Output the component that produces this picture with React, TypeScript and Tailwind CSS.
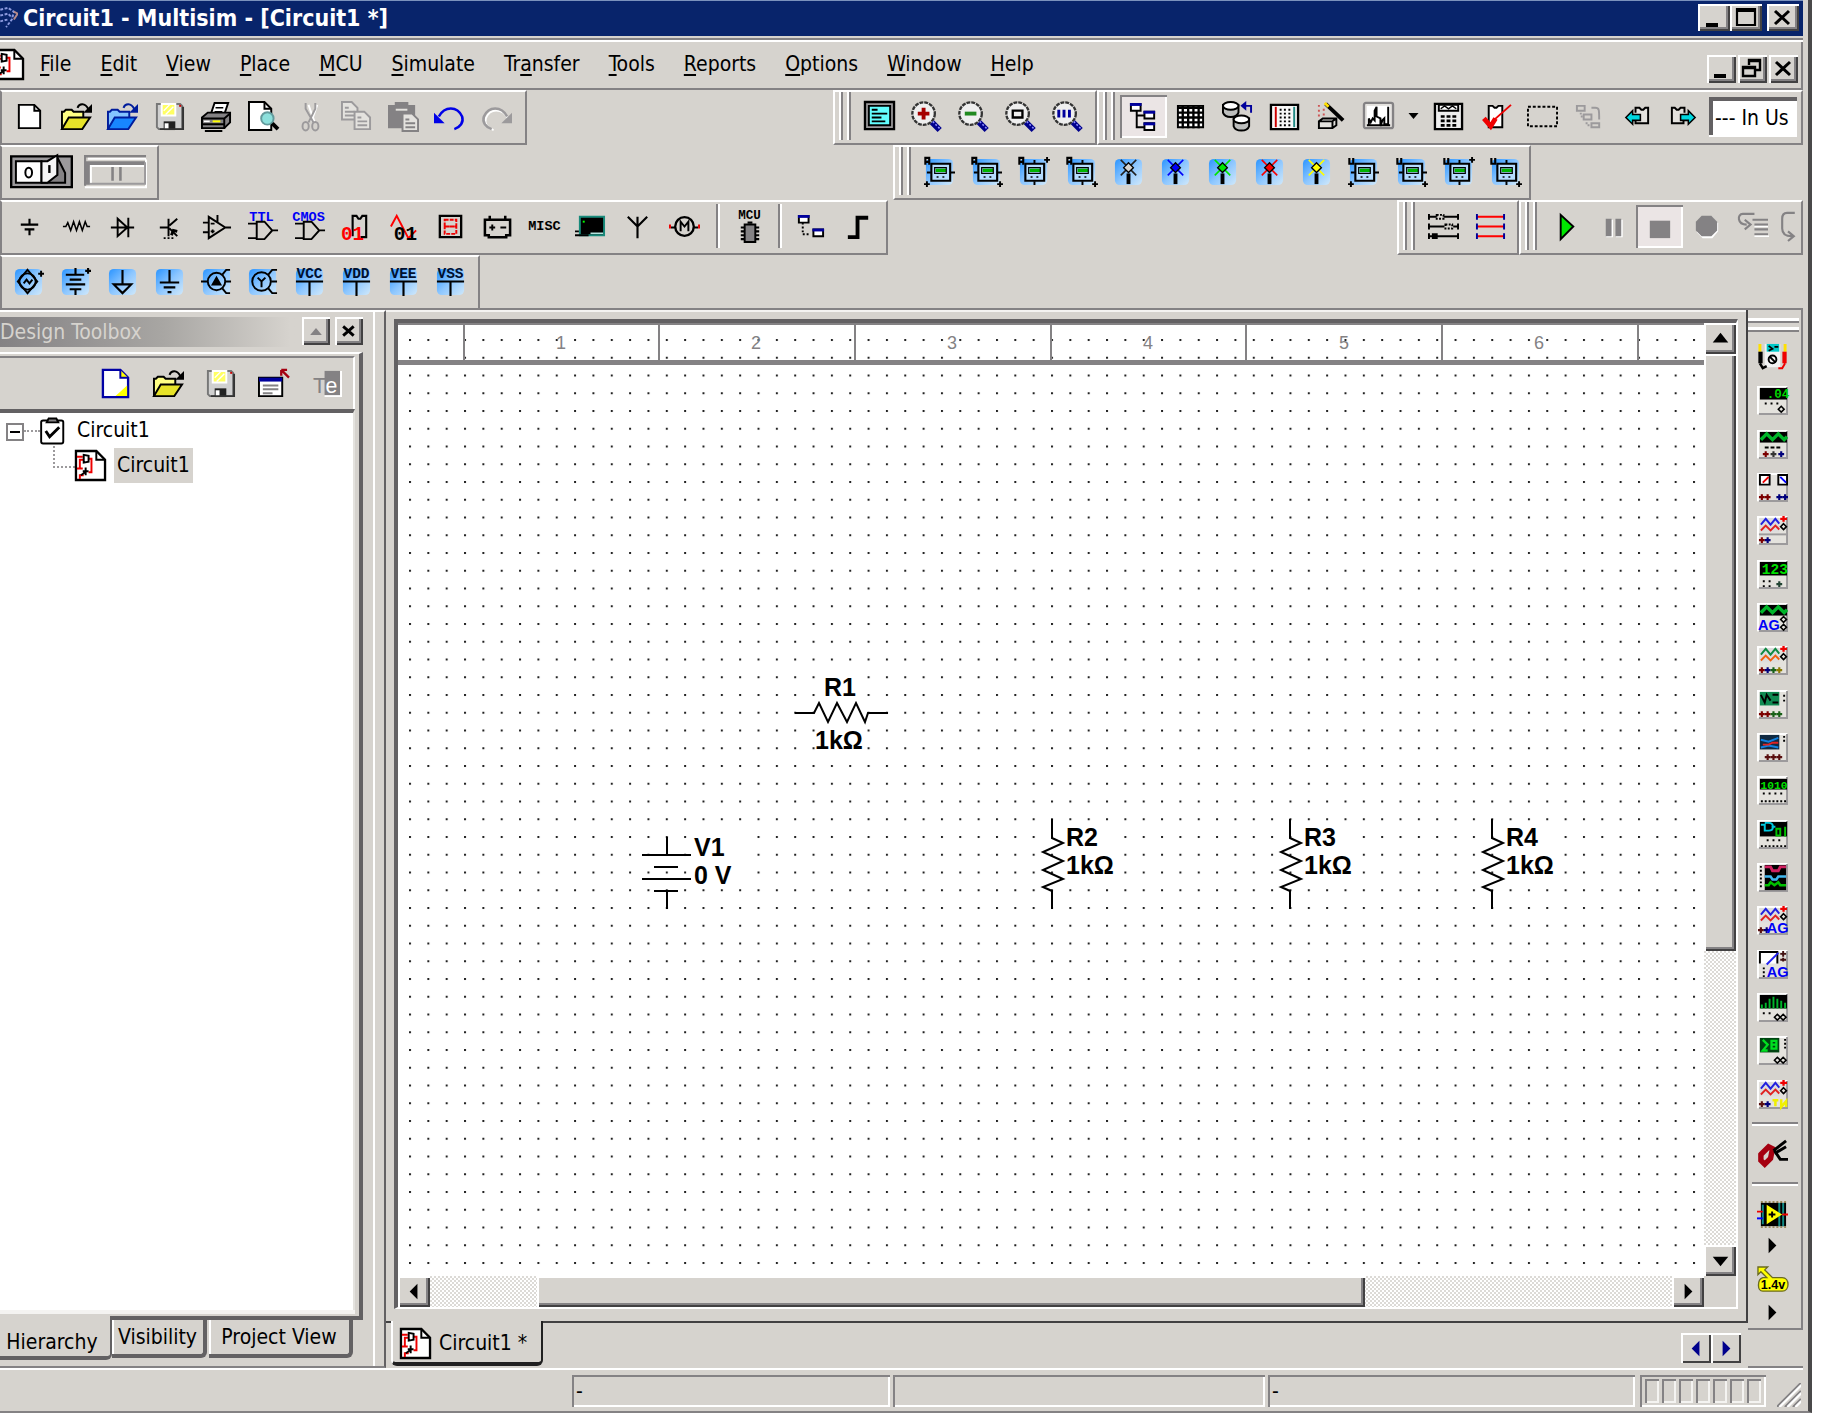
import type { ReactNode } from "react";

type Tool = { label: string; icon: ReactNode; disabled?: boolean };

const RAISED =
  "shadow-[inset_2px_2px_0_#fff,inset_-2px_-2px_0_#424142,inset_-4px_-4px_0_#848284]";
const DITHER =
  "bg-[repeating-conic-gradient(#ffffff_0_25%,#dcdad6_0_50%)] bg-[length:4px_4px]";

// Every toolbar glyph is drawn on the classic 16x16 grid.
function Ic({ children, stroke = "#000" }: { children: ReactNode; stroke?: string }) {
  return (
    <svg
      viewBox="0 0 16 16"
      className="h-[31px] w-[31px] shrink-0 overflow-visible"
      fill="none"
      stroke={stroke}
      aria-hidden="true"
    >
      {children}
    </svg>
  );
}

function GlyphText({ x, y, size, fill, children }: { x: number; y: number; size: number; fill: string; children: string }) {
  return (
    <text x={x} y={y} fontSize={size} fill={fill} stroke="none" fontWeight="bold" textAnchor="middle" fontFamily="Liberation Mono, monospace">
      {children}
    </text>
  );
}

/* ---------- standard toolbar ---------- */

const folder = (light: string, line: string, front: string) => (
  <Ic stroke={line}>
    <path fill={light} d="M.5 14.5v-9h1l1-1h3l1 1h5v3" />
    <path fill={front} d="M.5 14.5l3.500-6h11l-4 6z" />
    <path d="M8.500 3.500c1-2.500 4-2.500 5.500.5" />
    <path fill={line} stroke="none" d="M16 1.500v4.500h-4.500z" />
  </Ic>
);

const floppy = (
  <Ic stroke="#777">
    <path fill="#d0d0d0" d="M1.500 1.500h12l1 1v12h-12l-1-1z" />
    <path fill="#ffff63" stroke="#fff" d="M4 1.500h7v6h-7z" />
    <path stroke="#fff" strokeWidth=".7" d="M5 5l3-3M6 7l4-4" />
    <path fill="#222" stroke="none" d="M5 10.500h6v4.500h-6z" />
    <path fill="#fff" stroke="none" d="M5.500 11.500h2v3h-2z" />
    <path stroke="#c00" d="M13 2.500h1" />
    <path stroke="#333" d="M15 3v11.500h-12" />
  </Ic>
);

const miniPage = (x: number, y: number) => (
  <g transform={`translate(${x} ${y})`}>
    <path fill="#e4e2de" d="M.5.5h5l3 3v6h-8z" />
    <path d="M2 3.500h2M2 5.500h5M2 7.500h5" />
  </g>
);

const STANDARD: Tool[] = [
  { label: "New", icon: <Ic><path fill="#fff" d="M2.500 2h8l3 3v9h-11z" /><path d="M10.500 2v3h3" /></Ic> },
  { label: "Open", icon: folder("#ffff84", "#000", "#e7e329") },
  { label: "Open sample", icon: folder("#84c3ff", "#001c9c", "#1886ff") },
  { label: "Save", icon: floppy },
  {
    label: "Print",
    icon: (
      <Ic>
        <path fill="#fff" d="M5 7l2-6h7l-2 6z" />
        <path d="M7.500 3.500h4M7 5.500h4" strokeWidth=".8" />
        <path fill="#848284" d="M.5 8.500l3-2.500h11.500v5l-3 3h-11.500z" />
        <path d="M.5 9h11.500l3-2.500M.5 12h11.500M12 9v5.500M2 15.500h9" />
        <path stroke="#ffff00" d="M6 10.500h4" />
        <path stroke="#fff" strokeWidth=".8" d="M1.500 10.500h3" />
      </Ic>
    ),
  },
  {
    label: "Print preview",
    icon: (
      <Ic>
        <path fill="#fff" d="M.5 .5h8l3.500 3.500v11h-11.500z" />
        <path d="M8.500 .5v3.500h3.500" />
        <circle cx="10" cy="9" r="3.200" fill="#8ce0dc" stroke="#639a9c" />
        <path strokeWidth="2" d="M12.500 11.500l3 3" />
      </Ic>
    ),
  },
  {
    label: "Cut",
    disabled: true,
    icon: (
      <Ic stroke="#9c9a9c">
        <path stroke="#fff" d="M7.500 2l3 8.500M12 2l-3 8.500" />
        <path d="M6 1v3l4 7M11 1v3l-3.500 7" />
        <ellipse cx="6" cy="13" rx="1.600" ry="2.200" />
        <ellipse cx="11" cy="13" rx="1.600" ry="2.200" />
      </Ic>
    ),
  },
  { label: "Copy", disabled: true, icon: <Ic stroke="#9c9a9c">{miniPage(0, 0)}{miniPage(6.500, 5)}</Ic> },
  {
    label: "Paste",
    disabled: true,
    icon: (
      <Ic stroke="#848284">
        <path fill="#848284" d="M.5 2.500h3.500v-1.500h6v1.500h3.500v11h-13z" />
        <path stroke="#e4e2de" d="M4 4.500h6" />
        {miniPage(7, 6)}
      </Ic>
    ),
  },
  {
    label: "Undo",
    icon: (
      <Ic stroke="#0000e7">
        <path strokeWidth="1.300" d="M2.500 8c3-5.500 9.500-5.500 12 0c1 3-1 5.500-4 6.500" />
        <path fill="#0000e7" stroke="none" d="M0 6v5.500h5.500z" />
      </Ic>
    ),
  },
  {
    label: "Redo",
    disabled: true,
    icon: (
      <Ic stroke="#9c9a9c">
        <path stroke="#fff" d="M14 9c-3-5.500-9.500-5.500-11.500 0c-1 3 1 5 4 6" />
        <path strokeWidth="1.300" d="M13.500 8c-3-5.500-9.500-5.500-12 0c-1 3 1 5.500 4 6.500" />
        <path fill="#9c9a9c" stroke="none" d="M16 6v5.500h-5.500z" />
      </Ic>
    ),
  },
];

/* ---------- view toolbar ---------- */

const zoomGlass = (mark: ReactNode) => (
  <Ic>
    <circle cx="6.500" cy="6.500" r="5.800" fill="#efefef" stroke="#333" strokeWidth="1.200" strokeDasharray="2 .5" />
    <path stroke="#00008c" strokeWidth="3" d="M10.800 11l4 4" />
    <path stroke="#8c8cff" strokeWidth=".8" strokeDasharray="1 1" d="M11.200 10.600l4 4" />
    {mark}
  </Ic>
);

const VIEW: Tool[] = [
  {
    label: "Full screen",
    icon: (
      <Ic>
        <path fill="#9c9a9c" strokeWidth="1.200" d="M.5.5h15v14h-15z" />
        <path fill="#63ffff" d="M2.500 2.500h11v10h-11z" />
        <path d="M4 4.500h3M4 6.500h8M4 8.500h5M4 10.500h7" />
      </Ic>
    ),
  },
  { label: "Zoom in", icon: zoomGlass(<path stroke="#a50000" strokeWidth="2" d="M6.500 3.500v6M3.500 6.500h6" />) },
  { label: "Zoom out", icon: zoomGlass(<path stroke="#218a21" strokeWidth="2" d="M3.500 6.500h6" />) },
  { label: "Zoom area", icon: zoomGlass(<path strokeWidth="1.200" d="M4 5h5v3.500h-5z" />) },
  { label: "Zoom fit", icon: zoomGlass(<path stroke="#00009c" strokeWidth="1.500" d="M3.500 4.500v4M6.200 4.500v4M9 4.500v4" />) },
];

const node = (x: number, y: number) => (
  <g transform={`translate(${x} ${y})`}>
    <path fill="#fff" stroke="#000" d="M.5.5h5v3.500h-5z" />
    <path stroke="#00009c" strokeWidth="1.500" d="M0 .8h6" />
  </g>
);

const hierarchyIcon = (
  <Ic>
    <path d="M4.500 5v8.500h4M4.500 7.500h4" />
    {node(1, 1)}
    {node(8, 5)}
    {node(8, 11)}
  </Ic>
);

const disk = (x: number, y: number) => (
  <g transform={`translate(${x} ${y})`}>
    <path fill="#bdbebd" d="M.5 2v4c1 3 7 3 8 0v-4z" />
    <ellipse cx="4.500" cy="2.500" rx="4" ry="2" fill="#fff" />
  </g>
);

const MAIN_LEFT: Tool[] = [
  {
    label: "Spreadsheet view",
    icon: (
      <Ic>
        <path fill="#fff" d="M1.500 2.500h13v11h-13z" />
        <path strokeWidth="1.200" d="M1.500 3.500h13M1.500 6h13M1.500 8.500h13M1.500 11h13M4 2v12M6.800 2v12M9.500 2v12M12.200 2v12" />
      </Ic>
    ),
  },
  {
    label: "Database manager",
    icon: (
      <Ic>
        {disk(0, 0)}
        {disk(5.500, 7)}
        <path stroke="#00009c" d="M15 6v-3.500h-4" />
        <path fill="#00009c" stroke="none" d="M9.500 2.500l3-2.500v5z" />
      </Ic>
    ),
  },
  {
    label: "Breadboard",
    icon: (
      <Ic>
        <path fill="#f7f7f7" strokeWidth="1.200" d="M1 2h14v12.500h-14z" />
        <path stroke="#c00" d="M3.500 3v10.500" />
        <path stroke="#218a84" d="M13 3v10.500" />
        <path strokeDasharray="1 1" d="M6 4v9M8.200 4v9M10.500 4v9" />
      </Ic>
    ),
  },
  {
    label: "Component wizard",
    icon: (
      <Ic>
        <path stroke="#c55" strokeDasharray="1 1.500" d="M1.500 2v7M4 4v4" />
        <path strokeWidth="2" d="M5 1.500l9 8.500" />
        <path stroke="#ffe000" strokeWidth="1.500" d="M4.500 1l2 2" />
        <path fill="#e4e2de" d="M1.500 10.500l2-1.500h7v3.500l-2 1.500h-7zM1.500 10.500h7v3.500M8.500 10.500l2-1.500" />
      </Ic>
    ),
  },
  {
    label: "Grapher",
    icon: (
      <Ic>
        <rect x=".5" y="1" width="15" height="13" rx="1" fill="#e4e2de" stroke="#848284" strokeWidth="1.200" />
        <path fill="#fff" stroke="none" d="M2 2.500h12v10h-12z" />
        <path d="M2 12.500h12M3 12v-3l1 2 1-2 1 1v-5l1-2v5l2 1v4l1-3 1-1v3h2v-9" />
      </Ic>
    ),
  },
];

const MAIN_RIGHT: Tool[] = [
  {
    label: "Postprocessor",
    icon: (
      <Ic>
        <path fill="#efefef" strokeWidth="1.200" d="M1 1.500h14v13h-14z" />
        <path fill="#fff" d="M3 2h10v3h-10z" />
        <path d="M4 4l2-1.500 2 1.500 2-1.500 2 1.500" strokeWidth=".8" />
        <path strokeDasharray="2 1" strokeWidth="1.400" d="M4 8h9M4 10.300h9M4 12.600h9" />
      </Ic>
    ),
  },
  {
    label: "Electrical rules check",
    icon: (
      <Ic>
        <path fill="#fff" d="M4.500 2.500h2l1 1h1l1-1h2v11h-7z" />
        <path stroke="#e00" strokeWidth="2.500" d="M2 9l3.500 4 2.500-4" />
        <path stroke="#e00" d="M7 10l9-8" />
      </Ic>
    ),
  },
  { label: "Capture area", icon: <Ic><path strokeDasharray="1.500 1" d="M.5 3h15v10h-15z" /></Ic> },
  {
    label: "Go to parent sheet",
    disabled: true,
    icon: (
      <Ic stroke="#9c9a9c">
        <path d="M1.500 2.500h4v2.500h-4zM5 7h4v2.500h-4zM9 11.500h4v2h-4zM9 3.500h2c2 0 2 1 2 6" />
        <path strokeDasharray="1 1" d="M3.500 6v2h1M6.500 11v1.500h2" />
      </Ic>
    ),
  },
  {
    label: "Back annotate",
    icon: (
      <Ic>
        <path fill="#e4e2de" d="M7.500 6v-2.500h2l1 1h1l1-1h1.500v8h-6.500v-2" />
        <path fill="#00d8e0" strokeWidth=".8" d="M2.500 8.500l3.500-3.500v2h4v3h-4v2z" />
      </Ic>
    ),
  },
  {
    label: "Forward annotate",
    icon: (
      <Ic>
        <path fill="#e4e2de" d="M8.500 6v-2.500h-2l-1 1h-1l-1-1h-1.500v8h6v-2" />
        <path fill="#00d8e0" strokeWidth=".8" d="M14 8.500l-3.500-3.500v2h-4v3h4v2z" />
      </Ic>
    ),
  },
];

/* ---------- virtual measurement toolbar ---------- */

const Tile = () => <rect x="1" y="1.500" width="14" height="13.500" rx="2.500" fill="url(#tile)" stroke="none" />;

function meter(letter: string, vertical: boolean, px: number, py: number) {
  return (
    <Ic>
      <Tile />
      <path strokeWidth="1.100" fill="#b4dcff" d="M3.800 4h9.700v8.800h-9.700z" />
      <path stroke="#00b400" strokeWidth="1.700" d="M6 7.400h5.500" />
      <path d="M5.500 6h6v3h-6z" strokeWidth=".6" />
      <path strokeWidth=".8" strokeDasharray="1 2" d="M6.500 10.800h4" />
      <path d={vertical ? "M8.500 2v2M8.500 13v2" : "M1.500 8.500h2M13.500 8.500h2.500"} />
      <path strokeWidth="1.100" d={letter === "A" ? "M.7 4.500v-3.500h2v3.500M.7 3h2" : "M.7 1v3h2v-3"} />
      <path d={`M${px - 1.500} ${py}h3M${px} ${py - 1.500}v3`} />
    </Ic>
  );
}

const probe = (color: string) => (
  <Ic>
    <Tile />
    <path stroke={color === "#d6d3ce" ? "#222" : color} strokeWidth=".8" d="M4 2l8 8M12 2l-8 8" />
    <path strokeWidth="2" d="M8 9v5.500" />
    <path fill={color} strokeWidth=".7" d="M8 3.500l2.500 2.500-2.500 2.500-2.500-2.500z" />
  </Ic>
);

const MEASURE: Tool[] = [
  { label: "Ammeter, horizontal", icon: meter("A", false, 1.500, 14.500) },
  { label: "Ammeter, horizontal rotated", icon: meter("A", false, 15, 14.500) },
  { label: "Ammeter, vertical", icon: meter("A", true, 15, 2) },
  { label: "Ammeter, vertical rotated", icon: meter("A", true, 15, 14.500) },
  { label: "Probe", icon: probe("#d6d3ce") },
  { label: "Blue probe", icon: probe("#0000f7") },
  { label: "Green probe", icon: probe("#00e700") },
  { label: "Red probe", icon: probe("#f70000") },
  { label: "Yellow probe", icon: probe("#ffff00") },
  { label: "Voltmeter, horizontal", icon: meter("U", false, 1.500, 14.500) },
  { label: "Voltmeter, horizontal rotated", icon: meter("U", false, 15, 14.500) },
  { label: "Voltmeter, vertical", icon: meter("U", true, 15, 2) },
  { label: "Voltmeter, vertical rotated", icon: meter("U", true, 15, 14.500) },
];

/* ---------- components toolbar ---------- */

const gate = (name: string) => (
  <Ic>
    <GlyphText x={7} y={5} size={7} fill="#0000f7">{name}</GlyphText>
    <path d="M0 6.500h5M0 14h5M4.500 5.500v9h4l4-4.500-4-4.500zM12.500 10h3" />
  </Ic>
);

const COMPONENTS: Tool[] = [
  { label: "Source", icon: <Ic><path strokeWidth="1.100" d="M8 4v3M3.500 7h9M5.500 9.500h5M8 9.500v3" /></Ic> },
  { label: "Basic", icon: <Ic><path strokeWidth=".8" d="M1 8h1.500l1-2 1.500 4 1.500-4.500 1.500 4.500 1.500-4.500 1.500 4.500 1.500-4.500 1 2.500h1.500" /></Ic> },
  { label: "Diode", icon: <Ic><path d="M2 8.500h12M5.500 4v9l5-4.500zM11 3.500v10" /></Ic> },
  {
    label: "Transistor",
    icon: (
      <Ic>
        <path d="M3 8.500h4M7.500 4v9M8 7.500l4-3.500M8 9l4 4" />
        <path strokeWidth="1.500" d="M9 12.500l1-2.500 2 .5" />
        <path strokeDasharray="1 1" d="M5 14h6" />
      </Ic>
    ),
  },
  {
    label: "Analog",
    icon: (
      <Ic>
        <path d="M4 3v11l8.500-5.500zM1 6h3M1 11h3M12.500 8.500h3M8.500 2v4" />
        <path strokeWidth=".9" d="M5 6.500h2M5 10.500h2M6 9.500v2" />
      </Ic>
    ),
  },
  { label: "TTL", icon: gate("TTL") },
  { label: "CMOS", icon: gate("CMOS") },
  {
    label: "Misc digital",
    icon: (
      <Ic>
        <path strokeWidth="1.100" d="M6 13v-10.500h2l1 1.500h1l1-1.500h2v11h-3" />
        <GlyphText x={6} y={15} size={10} fill="#f00">01</GlyphText>
      </Ic>
    ),
  },
  {
    label: "Mixed",
    icon: (
      <Ic>
        <path stroke="#f00" d="M1.500 8l3-5.500 6 11.500 4-4" />
        <GlyphText x={9} y={15} size={10} fill="#000">01</GlyphText>
      </Ic>
    ),
  },
  {
    label: "Indicator",
    icon: (
      <Ic>
        <path strokeWidth="1.200" d="M2.500 2.500h11v11h-11z" />
        <path stroke="#e00" strokeDasharray="2 .6" d="M5 4.500h6v3.500h-6zM5 8h6v3.800h-6z" />
      </Ic>
    ),
  },
  {
    label: "Power",
    icon: (
      <Ic>
        <path strokeWidth="1.300" d="M1.500 4.500h13v8h-2v1h-9v-1h-2zM4 4v-1.500M12 4v-1.500" />
        <path d="M3.800 8.500h3M5.300 7v3M9.500 8.500h3" />
      </Ic>
    ),
  },
  { label: "Miscellaneous", icon: <Ic><GlyphText x={8} y={10} size={7} fill="#000">MISC</GlyphText></Ic> },
  {
    label: "Advanced peripherals",
    icon: (
      <Ic>
        <path fill="#000" stroke="#188a7b" d="M2.500 3h12.500v9.500h-12.500z" />
        <path stroke="#b5e3de" strokeWidth=".8" d="M8 11.500h6.500" />
        <path stroke="#0f0" d="M4 5.500h1" />
        <path d="M0 10.500h2M0 12.500h7" />
      </Ic>
    ),
  },
  { label: "RF", icon: <Ic><path strokeWidth="1.100" d="M8 3v11M3 3l5 5 5-5" /></Ic> },
  {
    label: "Electromechanical",
    icon: (
      <Ic>
        <circle cx="8" cy="8" r="4.800" strokeWidth="1.200" />
        <path d="M1 8.500h2.500M12.500 8.500h2.500M6 10.500v-5l2 2.500 2-2.500v5" />
        <path stroke="#e00" d="M.5 7v2M15.500 7v2" />
      </Ic>
    ),
  },
];

const mcuIcon = (
  <Ic>
    <GlyphText x={8} y={4} size={6.500} fill="#000">MCU</GlyphText>
    <path fill="#848284" d="M5.500 7h5.500v9h-5.500z" />
    <path strokeWidth="1.100" d="M3.500 8.500h2M3.500 10.500h2M3.500 12.500h2M3.500 14.500h2M11 8.500h2M11 10.500h2M11 12.500h2M11 14.500h2M7 6h2.500" />
  </Ic>
);

const BLOCKS: Tool[] = [
  { label: "Hierarchical block", icon: <Ic><path strokeDasharray="1 1" d="M4 6v6h4" />{node(1.500, 2)}{node(9, 9)}</Ic> },
  { label: "Bus", icon: <Ic><path strokeWidth="2" d="M2.500 13.500h5v-10h5.500" /></Ic> },
];

/* ---------- power source toolbar ---------- */

const rail = (name: string) => (
  <Ic>
    <Tile />
    <GlyphText x={8} y={6} size={7.500} fill="#001030">{name}</GlyphText>
    <path strokeWidth="1.100" d="M1 8h14M8 8v7.500" />
  </Ic>
);

const SOURCES: Tool[] = [
  {
    label: "AC source",
    icon: (
      <Ic>
        <Tile />
        <circle cx="7.500" cy="8" r="4.200" />
        <path d="M7.500 2l5 6-5 6-5-6zM5.500 9l1.500-2 1.500 2 1.500-2M13 4h3M14.500 2.500v3" />
      </Ic>
    ),
  },
  { label: "DC source", icon: <Ic><Tile /><path strokeWidth="1.100" d="M8 1v3.500M3 4.500h9.500M5 7h6M3 9.500h10M5 12h6M8 12v3M13 2.500h3M14.500 1v3" /></Ic> },
  { label: "Digital ground", icon: <Ic><Tile /><path strokeWidth="1.100" d="M8 2v7.500M3.500 9.500h9l-4.500 4.500z" /></Ic> },
  { label: "Ground", icon: <Ic><Tile /><path strokeWidth="1.100" d="M8 2v6.500M3 8.500h10M5 11h6M7 13.500h2" /></Ic> },
  {
    label: "Three phase delta",
    icon: (
      <Ic>
        <Tile />
        <circle cx="8" cy="8" r="4.500" />
        <path d="M0 8h3.500M11 4.500l2-2.500h2M12.500 8h3M11 11.500l2 2.500h2" />
        <path fill="#000" d="M6 9.500h4l-2-3.500z" />
      </Ic>
    ),
  },
  {
    label: "Three phase wye",
    icon: (
      <Ic>
        <Tile />
        <circle cx="7.500" cy="8" r="4.800" />
        <path d="M11 4.500l2-2.500h2.500M12.500 8h3M11 11.500l2 2.500h2.500M5.500 6l2 2 2-2M7.500 8v3" />
      </Ic>
    ),
  },
  { label: "VCC", icon: rail("VCC") },
  { label: "VDD", icon: rail("VDD") },
  { label: "VEE", icon: rail("VEE") },
  { label: "VSS", icon: rail("VSS") },
];

/* ---------- simulation toolbars ---------- */

const BREAKS: Tool[] = [
  {
    label: "Toggle wires",
    icon: (
      <Ic>
        <path d="M.5 3h4M8 3h7.500M.5 8h8M13 8h2.500M.5 13h15M.5 1.500v3M15.500 1.500v3M.5 6.500v3M15.500 6.500v3M.5 11.500v3M15.500 11.500v3M2.500 12h2v2h-2z" />
        <path strokeDasharray="1 .7" d="M4.500 2h3.500v2h-3.500zM9 7h3.500v2h-3.500z" />
      </Ic>
    ),
  },
  {
    label: "Show nets",
    icon: (
      <Ic stroke="#f00">
        <path d="M1 3h14M1 8h14M1 13h14" />
        <path stroke="#00009c" d="M1 1.500v3M15 1.500v3M1 6.500v3M15 6.500v3M1 11.500v3M15 11.500v3" />
      </Ic>
    ),
  },
];

const playIcon = <Ic><path fill="#00e700" d="M5 2v12.500l6.500-6.500z" /></Ic>;
const pauseIcon = <Ic><path stroke="#fff" strokeWidth="3.500" d="M6 4.500v9M11 4.500v9" /><path stroke="#848284" strokeWidth="3" d="M5.500 4v9M10.500 4v9" /></Ic>;
const stopIcon = <Ic><path fill="#848284" stroke="none" d="M3 5h10.500v9h-10.500z" /></Ic>;
const recordIcon = (
  <Ic>
    <path fill="#fff" stroke="none" d="M6 3h5l3 3.500v4l-3 3.500h-5l-3-3z" />
    <path fill="#848284" stroke="none" d="M5.500 2.500h5l3 3v4.500l-3 3h-5l-3-3v-4.500z" />
  </Ic>
);
const stepIcon = (
  <Ic stroke="#848284">
    <path strokeWidth="1.100" d="M9 1.500h-6c-3 0-3 5.500 2 5.500M4 4.500l3 2.500-3 2.500M8 4.500h8M9 7h7M9 9.500h7M9 12h7" />
    <path stroke="#fff" strokeWidth=".8" d="M9 13h7.500M9 8h7" />
  </Ic>
);
const stepOverIcon = (
  <svg viewBox="0 0 8 16" className="h-[31px] w-4 shrink-0" fill="none" stroke="#848284" aria-hidden="true">
    <path strokeWidth="1.100" d="M7.500 1h-4c-2 0-2.500 1-2.500 3v5c0 3 2 4 5 4M4 10.500l3 2.500-3 2.500" />
  </svg>
);

/* ---------- instruments ---------- */

function instrument(body: ReactNode) {
  return (
    <Ic>
      <path fill="#e4e2dd" stroke="none" d="M0 .5h16v15h-16z" />
      <path stroke="#fff" d="M.5 15v-14h15" />
      <path stroke="#9c9a9c" d="M1 15h14.500v-14" />
      {body}
    </Ic>
  );
}

const screen = (x: number, y: number, w: number, h: number, fill = "#000") => (
  <rect x={x} y={y} width={w} height={h} fill={fill} stroke="none" />
);
const greenWave = (
  <>
    {screen(1.500, 1.500, 14, 5.500)}
    <path stroke="#00b52a" strokeWidth="1.800" d="M2 5.500l3-3 3 3 3-3 3 3 1.500-1.500" />
  </>
);
const scope = (a: string, b: string) => (
  <>
    {screen(1.500, 1.500, 10, 7.500, "#ddd")}
    <path stroke={a} d="M2 5l2.500-3 2.500 3 2.500-3 2 2.500" />
    <path stroke={b} d="M2 8l2.500-2.500 2.500 2.500 2.500-2.500 2 2" />
    <path stroke="#e00" strokeWidth="1.200" d="M12 2h3.500M13.700.5v3" />
    <path strokeWidth=".8" d="M13.700 4.500l1.500 1.500-1.500 1.500-1.500-1.500z" />
  </>
);
const plusRow = (x: number, colors: string[]) =>
  colors.map((c, i) => {
    const cx = x + i * 3;
    return <path key={i} stroke={c} strokeWidth="1.100" d={`M${cx - 1.500} 13h3M${cx} 11.500v3`} />;
  });
const ag = (x: number) => (
  <text x={x} y="14.500" fontSize="7.500" fontWeight="bold" fill="#0000f7" stroke="none" fontFamily="Liberation Sans, sans-serif">AG</text>
);

const INSTRUMENTS: Tool[] = [
  {
    label: "Multimeter",
    icon: (
      <Ic>
        <rect x="4" y="1" width="8" height="12" fill="#f4f4f4" stroke="none" />
        {screen(5, 1, 6.500, 4, "#00c8c8")}
        <path strokeWidth=".9" d="M6 2l2 1.500-2 1M9 2.500h2" />
        <circle cx="8" cy="9" r="2" />
        <path d="M6.500 7.500l3 3" />
        <path stroke="#ffe000" strokeWidth="1.500" d="M1.500 1v4M14.500 1v4" />
        <path strokeWidth="2.200" d="M1.800 5v6" />
        <path strokeWidth="1.300" d="M1.500 11l1.500 2.500 2-1" />
        <path stroke="#e00" strokeWidth="2.200" d="M14.200 5v6" />
        <path stroke="#e00" d="M14.500 11l-1.500 2.500h-2" />
      </Ic>
    ),
  },
  {
    label: "Function generator",
    icon: instrument(
      <>
        {screen(1.500, 1.500, 14, 6)}
        <text x="5" y="6.800" fontSize="6.500" fontWeight="bold" fill="#00d800" stroke="none" fontFamily="Liberation Mono, monospace">.04</text>
        <path strokeDasharray="1 2" d="M4 9.500h8" />
        <path strokeWidth=".8" d="M12.500 11l1.500 1.500-1.500 1.500-1.500-1.500z" />
      </>,
    ),
  },
  { label: "Wattmeter", icon: instrument(<>{greenWave}<path strokeDasharray="2 1" d="M4 9.500h8" />{plusRow(4.500, ["#7b0000"])}{plusRow(8.500, ["#333"])}{plusRow(12.500, ["#00007b"])}</>) },
  {
    label: "Oscilloscope",
    icon: instrument(
      <>
        <path fill="#fff" d="M1.500 6.500v-5h5v5zM11 6.500v-5h4.500v5z" />
        <path stroke="#e00" d="M3 5.500l3-3" />
        <path stroke="#00f" d="M12 2.500l3 3" />
        {plusRow(2.500, ["#7b0000", "#7b0000"])}
        {plusRow(11.500, ["#00007b", "#00007b"])}
      </>,
    ),
  },
  { label: "Four channel scope", icon: instrument(<>{scope("#2222e0", "#e02222")}<path stroke="#9c9a9c" d="M1 10h14" />{plusRow(2.500, ["#7b0000", "#00007b"])}</>) },
  {
    label: "Frequency counter",
    icon: instrument(
      <>
        {screen(1.500, 1.500, 14, 7)}
        <text x="2.500" y="7.500" fontSize="7.500" fontWeight="bold" fill="#00e000" stroke="none" fontFamily="Liberation Mono, monospace">123</text>
        <path strokeDasharray="1 1.500" d="M3.500 11v4M6.500 11v4" />
        {plusRow(11.500, ["#243"])}
      </>,
    ),
  },
  { label: "Agilent generator", icon: instrument(<>{greenWave}{ag(0.500)}<path strokeWidth=".8" d="M13.700 7.500l1.500 1.500-1.500 1.500-1.500-1.500zM13.700 11.500l1.500 1.500-1.500 1.500-1.500-1.500z" /></>) },
  { label: "Spectrum scope", icon: instrument(<>{scope("#108a42", "#f06010")}{plusRow(2.500, ["#7b0000", "#00007b", "#186018", "#8a7a00"])}</>) },
  {
    label: "Bode plotter",
    icon: instrument(
      <>
        {screen(1.500, 1.500, 10, 7, "#108a52")}
        <path d="M2 3l2 4 1-4 2 3M8 3h3M8 7h3" />
        <path strokeDasharray="1 1.500" d="M14 3v4" />
        {plusRow(2.500, ["#7b0000", "#7b0000", "#186018", "#186018"])}
      </>,
    ),
  },
  {
    label: "Distortion analyzer",
    icon: instrument(
      <>
        {screen(1.500, 1.500, 10, 7.500, "#102a42")}
        <path stroke="#1080e0" d="M2 4l4 1 5-2M2 8l4-1 5 1" />
        <path stroke="#e02222" d="M3 6.500h3l2-1h3" />
        <path strokeDasharray="1 1" d="M14 2v4" />
        {plusRow(5.500, ["#5a1010", "#5a1010", "#5a1010"])}
      </>,
    ),
  },
  {
    label: "Word generator",
    icon: instrument(
      <>
        {screen(1.500, 2, 14, 5.500)}
        <text x="1.800" y="7" fontSize="5.800" fontWeight="bold" fill="#00e000" stroke="none" fontFamily="Liberation Mono, monospace">1010</text>
        <path strokeDasharray="1 2" d="M3 9.500h11" />
        <path strokeDasharray="1 1" d="M2 13.500h13" />
      </>,
    ),
  },
  {
    label: "Logic converter",
    icon: instrument(
      <>
        {screen(1.500, 1.500, 14, 7.500)}
        <path stroke="#00c8e0" d="M2 3h2v3h2c3 0 3-4 0-4h-2M7.500 4h2" />
        <path stroke="#00c000" d="M10 5h2v3.500h-2zM14.500 4v5" />
        <path strokeDasharray="1 2" d="M5 11h8" />
        <path strokeDasharray="1 1" d="M2 14h13" />
      </>,
    ),
  },
  {
    label: "Logic analyzer",
    icon: instrument(
      <>
        {screen(4, 1.500, 11, 13)}
        <path stroke="#d02060" strokeWidth="1.500" d="M4 2.500h3l1 2h3l1-2h3" />
        <path stroke="#40b8f0" strokeWidth="1.300" d="M4 7.500h3l1 1.500h2l1-1.500h4" />
        <path stroke="#00c000" strokeWidth="1.300" d="M4 12h2l1-1.500 2 1.500 2-1.500 1 1.500h3" />
        <path strokeDasharray="1 1" d="M2 2v12" />
      </>,
    ),
  },
  { label: "Agilent scope", icon: instrument(<>{scope("#2222e0", "#e02222")}{plusRow(2, ["#5a1010", "#00007b"])}{ag(5)}</>) },
  {
    label: "IV analyzer",
    icon: instrument(
      <>
        <path fill="#fff" d="M1.500 7.500v-6h9v6" />
        <path stroke="#2222f0" d="M5 8l6-6" />
        <path d="M12 2.500h3M13.500 1v3M12 5.500h3M13.500 4.500v2" stroke="#421010" />
        <path strokeDasharray="1 1" d="M3.500 9.500v5" />
        {ag(5)}
      </>,
    ),
  },
  {
    label: "Spectrum analyzer",
    icon: instrument(
      <>
        {screen(1.500, 1.500, 14, 7)}
        <path stroke="#00b52a" d="M2.500 8.500v-2M4.500 8.500v-3M6.500 8.500v-5M8.500 8.500v-6M10.500 8.500v-5M12.500 8.500v-4M14.500 8.500v-3" />
        <path strokeDasharray="1 2" d="M3 11h5" />
        <path strokeWidth=".8" d="M10.500 11.500l1.500 1.500-1.500 1.500-1.500-1.500zM13.500 11.500l1.500 1.500-1.500 1.500-1.500-1.500z" />
      </>,
    ),
  },
  {
    label: "Network analyzer",
    icon: instrument(
      <>
        {screen(1.500, 1.500, 10, 7.500, "#041")}
        <path stroke="#00e020" strokeWidth="1.200" d="M3 2.500l2.500 2.500-2.500 3h2.500M7.500 3h2.500v4h-2.500zM7 5h3.500" />
        <path strokeDasharray="1 1" d="M14.500 2v6" />
        <path strokeWidth=".8" d="M10.500 11.500l1.500 1.500-1.500 1.500-1.500-1.500zM13.500 11.500l1.500 1.500-1.500 1.500-1.500-1.500z" />
      </>,
    ),
  },
  {
    label: "Tektronix scope",
    icon: instrument(
      <>
        {scope("#2222e0", "#e02222")}
        {plusRow(2.500, ["#5a1010", "#00007b"])}
        <path stroke="#f0f000" strokeWidth="1.300" d="M8 11h3M9.500 11v3M12.500 10.500v4l2.500-3v3" />
      </>,
    ),
  },
];

const clampIcon = (
  <Ic>
    <path stroke="#a50010" strokeWidth="2.800" d="M2 8l4-4 2 1-1 5-3 3-2-2z" />
    <path strokeWidth="1.500" d="M8.500 6l6.500-5M9 7.500l6-3.500M9 6l3 4.500h4" />
  </Ic>
);
const labviewIcon = (
  <Ic>
    <path stroke="#9a8a5a" strokeDasharray="1 1" d="M2 1.500h13M2 14.500h13" />
    {screen(2, 2, 13, 12)}
    <path stroke="#108a84" d="M3 3v10M11.500 2v12M13.500 2v12" />
    <path fill="#ffff00" stroke="none" d="M5 3v10l8-5z" />
    <path d="M6 8h3.500M7.800 6.500v3" />
    <path stroke="#e00" d="M0 6.500h3M13 8h3" />
    <path stroke="#00f" d="M0 10h3" />
  </Ic>
);
const probeTagIcon = (
  <Ic stroke="#6a6a20">
    <path fill="#ffff00" strokeWidth=".7" d="M.5.5h5l-1.500 1.500 4 4h5c4 0 4 7 0 7h-10c-3 0-3-6 0-7h2l-3-3-1.500 1.500z" />
    <text x="8.200" y="11.800" fontSize="6.500" fontWeight="bold" fill="#000" stroke="none" textAnchor="middle" fontFamily="Liberation Sans, sans-serif">1.4v</text>
  </Ic>
);

const sheetIcon = (
  <Ic>
    <path fill="#fff" strokeWidth="1.200" d="M.5.500h10.500l4.500 4.500v10.500h-15z" />
    <path d="M11 .5v4.500h4.500" />
    <path stroke="#e00" d="M1 3.500h3M2.500 9v-4h2M7 4.500h1.500v7h-1.500M1 9.500h3M2.500 15v-2h2" />
    <path d="M4.500 2.500v4l2.500-.5v-3zM5.500 9v4M4 11h3M3 13l3-2" />
  </Ic>
);

/* ---------- shared pieces ---------- */

function ToolButton({ tool, className = "flex-1" }: { tool: Tool; className?: string }) {
  return (
    <button
      type="button"
      aria-label={tool.label}
      title={tool.label}
      disabled={tool.disabled}
      className={`flex h-11 items-center justify-center ${className}`}
    >
      {tool.icon}
    </button>
  );
}

function Grip() {
  return (
    <div className="mr-[5px] flex gap-1">
      <span className="h-12 w-1 border-r-2 border-[#848284] bg-white" />
      <span className="h-12 w-1 border-r-2 border-[#848284] bg-white" />
    </div>
  );
}

function Bar({ children, className = "", grip = false }: { children: ReactNode; className?: string; grip?: boolean }) {
  return (
    <div
      role="toolbar"
      className={`flex h-[55px] shrink-0 items-center border-t-2 border-r-2 border-b-2 border-l-2 border-t-white border-r-[#848284] border-b-[#848284] pb-[3px] pl-1 ${
        grip ? "border-l-white" : "border-l-[#848284]"
      } ${className}`}
    >
      {grip && <Grip />}
      {children}
    </div>
  );
}

const Separator = () => <span className="h-11 w-1 shrink-0 border-l-2 border-[#848284] bg-white" />;

function Arrow({ d, fill = "#000" }: { d: "up" | "down" | "left" | "right"; fill?: string }) {
  const paths = {
    up: "M8 5l4 5h-8z",
    down: "M4 6h8l-4 5z",
    left: "M5.500 8l4-4v8z",
    right: "M6 4l4 4-4 4z",
  };
  return (
    <svg viewBox="0 0 16 16" className="h-[31px] w-[31px] shrink-0" aria-hidden="true">
      <path d={paths[d]} fill={fill} />
    </svg>
  );
}

function CaptionButton({ label, small = false, children }: { label: string; small?: boolean; children: ReactNode }) {
  return (
    <button
      type="button"
      aria-label={label}
      className={`flex items-center justify-center bg-[#d6d3ce] ${RAISED} ${small ? "h-7 w-[29px]" : "h-[27px] w-8"}`}
    >
      <svg viewBox="0 0 12 12" className="h-6 w-6" fill="none" stroke="#000" aria-hidden="true">
        {children}
      </svg>
    </button>
  );
}

const closeMark = <path strokeWidth="1.500" d="M2 2.500l7 6.500M9 2.500l-7 6.500" />;
const minimizeMark = <path strokeWidth="2" d="M2 9.500h6" />;

/* ---------- window header ---------- */

const MENU: [string, string, string][] = [
  ["", "F", "ile"],
  ["", "E", "dit"],
  ["", "V", "iew"],
  ["", "P", "lace"],
  ["", "M", "CU"],
  ["", "S", "imulate"],
  ["Tr", "a", "nsfer"],
  ["", "T", "ools"],
  ["", "R", "eports"],
  ["", "O", "ptions"],
  ["", "W", "indow"],
  ["", "H", "elp"],
];

function TitleBar() {
  return (
    <header className="flex h-9 shrink-0 items-center border-t border-[#7b92bd] bg-[#08246b] pr-1 pb-0.5">
      <svg viewBox="0 0 9 16" className="h-[31px] w-[18px]" fill="none" aria-hidden="true">
        <path stroke="#8c9ade" strokeDasharray="1.500 .8" d="M0 4l4-1 3 2-1 4-3 4M0 7l4-1 2 2M0 10l4-1" />
        <path stroke="#b58a8a" d="M7 5l2 1-2 3" />
      </svg>
      <h1 className="ml-[5px] text-[23px] leading-6 font-bold whitespace-nowrap text-white">
        Circuit1 - Multisim - [Circuit1 *]
      </h1>
      <div className="ml-auto flex">
        <CaptionButton label="Minimize">{minimizeMark}</CaptionButton>
        <CaptionButton label="Maximize">
          <path d="M1.500 1.500h9v8h-9zM1 2.500h10" strokeWidth="1.100" />
        </CaptionButton>
        <span className="w-[5px]" />
        <CaptionButton label="Close">{closeMark}</CaptionButton>
      </div>
    </header>
  );
}

function MenuBar() {
  return (
    <nav className="mt-0.5 flex h-[52px] shrink-0 items-center border-t-2 border-b-2 border-t-[#848284] border-b-[#848284] pr-[5px] shadow-[inset_0_2px_0_#fff,inset_-2px_0_0_#848284]">
      <span className="-ml-[7px] flex">{sheetIcon}</span>
      <div className="ml-4 flex gap-[29px]">
        {MENU.map(([pre, key, post]) => (
          <button key={pre + key + post} type="button" className="text-[21px] leading-7 whitespace-nowrap">
            {pre}
            <span className="underline decoration-2 underline-offset-[3px]">{key}</span>
            {post}
          </button>
        ))}
      </div>
      <div className="mt-2.5 ml-auto flex gap-0.5">
        <CaptionButton label="Minimize sheet" small>{minimizeMark}</CaptionButton>
        <CaptionButton label="Restore sheet" small>
          <path d="M4 4v-2.500h5.500v5h-2M3.500 2h6.500M1 5h6v4.500h-6zM.5 5.500h7" strokeWidth="1.200" />
        </CaptionButton>
        <CaptionButton label="Close sheet" small>{closeMark}</CaptionButton>
      </div>
    </nav>
  );
}

function Toolbars() {
  return (
    <div className="shrink-0">
      <div className="flex">
        <Bar className="w-[527px] pr-[5px]">
          {STANDARD.map((t) => <ToolButton key={t.label} tool={t} />)}
        </Bar>
        <Bar grip className="ml-auto w-[264px]">
          {VIEW.map((t) => <ToolButton key={t.label} tool={t} className="w-[47px]" />)}
        </Bar>
        <Bar grip className="w-[706px]">
          <button
            type="button"
            aria-label="Design toolbox"
            aria-pressed="true"
            className="flex h-[43px] w-[47px] items-center justify-center bg-[#ebe5e5] shadow-[inset_2px_2px_0_#848284,inset_-2px_-2px_0_#fff]"
          >
            {hierarchyIcon}
          </button>
          {MAIN_LEFT.map((t) => <ToolButton key={t.label} tool={t} className="w-[47px]" />)}
          <button type="button" aria-label="Grapher options" className="flex h-11 w-[23px] items-center justify-center">
            <svg viewBox="0 0 10 6" className="h-[6px] w-[11px]" aria-hidden="true"><path d="M0 0h10l-5 6z" /></svg>
          </button>
          {MAIN_RIGHT.map((t) => <ToolButton key={t.label} tool={t} className="w-[47px]" />)}
          <select
            aria-label="In use list"
            className="mr-1 ml-auto h-[38px] w-[88px] shrink-0 appearance-none rounded-none border-t-4 border-l-4 border-t-[#636163] border-l-[#636163] bg-white pl-0.5 text-[21px] leading-7 shadow-[0_2px_0_#fff]"
          >
            <option>--- In Us</option>
          </select>
        </Bar>
      </div>
      <div className="flex">
        <Bar className="w-[159px] gap-[11px]">
          <button type="button" aria-label="Run simulation switch" className="ml-1">
            <svg viewBox="0 0 32 18" className="h-9 w-[63px]" stroke="#000" fill="none" aria-hidden="true">
              <path fill="#9c9a9c" strokeWidth="1.200" d="M.6 1.600h30.800v15.600h-30.800z" />
              <path fill="#fff" d="M3 4h13v11h-13z" />
              <path fill="#848284" d="M16 15l8-4v-9l4 8v5z" />
              <path fill="#f4f4f4" d="M16 4l3 0 5-3v10l-5 4h-3z" />
              <path strokeWidth="1.200" d="M20 6v4" />
              <ellipse cx="9.500" cy="9.800" rx="1.700" ry="2.500" />
            </svg>
          </button>
          <button type="button" aria-label="Pause simulation" disabled>
            <svg viewBox="0 0 32 18" className="h-9 w-[63px]" fill="none" aria-hidden="true">
              <path stroke="#848284" strokeWidth="1.200" d="M.5 16.500v-15h31" />
              <path stroke="#fff" d="M2 2.800h29.500M.5 17.200h31v-14" />
              <path stroke="#848284" strokeWidth="2" d="M2 16v-11h29" />
              <path stroke="#9c9a9c" d="M3 15.500h28v-11" />
              <path stroke="#fff" d="M3.500 15v-8.500h27" />
              <path stroke="#848284" strokeWidth="1.300" d="M14.500 7v7M18.500 7v7" />
            </svg>
          </button>
        </Bar>
        <Bar grip className="mr-[272px] ml-auto w-[638px]">
          {MEASURE.map((t) => <ToolButton key={t.label} tool={t} />)}
        </Bar>
      </div>
      <div className="flex">
        <Bar className="w-[888px]">
          <div className="flex w-[702px]">
            {COMPONENTS.map((t) => <ToolButton key={t.label} tool={t} />)}
          </div>
          <span className="w-2" />
          <Separator />
          <ToolButton tool={{ label: "MCU", icon: mcuIcon }} className="w-[58px]" />
          <Separator />
          <span className="w-1" />
          {BLOCKS.map((t) => <ToolButton key={t.label} tool={t} className="w-[48px]" />)}
        </Bar>
        <Bar grip className="ml-auto w-[122px]">
          {BREAKS.map((t) => <ToolButton key={t.label} tool={t} className="w-[47px]" />)}
        </Bar>
        <Bar grip className="w-[284px]">
          <ToolButton tool={{ label: "Run", icon: playIcon }} className="w-[49px]" />
          <ToolButton tool={{ label: "Pause", icon: pauseIcon, disabled: true }} className="w-[45px]" />
          <button
            type="button"
            aria-label="Stop"
            className="flex h-[43px] w-[47px] items-center justify-center bg-[#ebe5e5] shadow-[inset_2px_2px_0_#848284,inset_-2px_-2px_0_#fff]"
          >
            {stopIcon}
          </button>
          <ToolButton tool={{ label: "Record", icon: recordIcon, disabled: true }} className="w-[46px]" />
          <ToolButton tool={{ label: "Step into", icon: stepIcon, disabled: true }} className="w-[47px]" />
          <ToolButton tool={{ label: "Step over", icon: stepOverIcon, disabled: true }} className="w-6" />
        </Bar>
      </div>
      <div className="flex border-b-2 border-[#848284]">
        <div role="toolbar" className="flex h-[53px] w-[480px] items-center border-t-2 border-r-2 border-l-2 border-t-white border-r-[#848284] border-l-[#848284] pr-1 pb-[3px] pl-[3px]">
          {SOURCES.map((t) => <ToolButton key={t.label} tool={t} />)}
        </div>
      </div>
    </div>
  );
}

/* ---------- design toolbox ---------- */

const PANEL_TOOLS: Tool[] = [
  {
    label: "New design",
    icon: (
      <Ic stroke="#0000a5">
        <path fill="#fff" strokeWidth="1.200" d="M1.500 1h9l4 4v10h-13z" />
        <path fill="#ffff00" stroke="none" d="M14 9v5.500h-6z" />
        <path fill="#ffff00" d="M10.500 1v4h4" />
      </Ic>
    ),
  },
  { label: "Open design", icon: folder("#ffff84", "#000", "#e7e329") },
  { label: "Save design", icon: floppy },
  {
    label: "Close design",
    icon: (
      <Ic>
        <path fill="#fff" d="M.5 5h12v9.500h-12z" />
        <path stroke="#00009c" strokeWidth="2" d="M.5 6h12" />
        <path stroke="#848284" d="M2.500 9h8M2.500 11h8M2.500 13h5" />
        <path stroke="#a50010" strokeWidth="1.200" d="M12 1h3M12 1v3M12 1l4 4" />
      </Ic>
    ),
  },
  {
    label: "Rename",
    disabled: true,
    icon: (
      <Ic>
        <path fill="#848284" stroke="none" d="M7 1.500h8v12.500h-8z" />
        <path stroke="#fff" d="M7 14.500h8.500v-13" />
        <text x="1" y="13" fontSize="11" fill="#848284" stroke="none" fontFamily="Liberation Sans, sans-serif">T</text>
        <text x="7.500" y="13" fontSize="11" fill="#fff" stroke="none" fontFamily="Liberation Sans, sans-serif">e</text>
      </Ic>
    ),
  },
];

function DesignToolbox() {
  return (
    <aside className="flex w-[386px] shrink-0 flex-col border-t-2 border-r-2 border-b-2 border-t-white border-r-[#636163] border-b-[#848284] pt-[5px] pr-[9px] pb-2 shadow-[inset_-9px_0_0_#d6d3ce,inset_-11px_0_0_#fff]">
      <div className="mr-3 flex h-[30px] shrink-0 items-start bg-linear-to-r from-[#848284] via-[#a8a6a3] via-45% to-[#d6d3ce] to-80%">
        <h2 className="text-[21px] leading-[30px] whitespace-nowrap text-[#d6d3ce]">Design Toolbox</h2>
        <div className="ml-auto flex gap-[5px]">
          <button type="button" aria-label="Roll up" className={`flex h-7 w-7 items-center justify-center bg-[#d6d3ce] ${RAISED}`}>
            <svg viewBox="0 0 10 6" className="h-[7px] w-3" aria-hidden="true"><path d="M0 6h10l-5-6z" fill="#848284" /></svg>
          </button>
          <button type="button" aria-label="Close toolbox" className={`flex h-7 w-7 items-center justify-center bg-[#d6d3ce] ${RAISED}`}>
            <svg viewBox="0 0 12 12" className="h-3.5 w-3.5" stroke="#000" strokeWidth="2.500" aria-hidden="true"><path d="M1 2l9 8M10 2l-9 8" /></svg>
          </button>
        </div>
      </div>
      <div className="mt-[5px] mr-3 flex min-h-0 flex-1 flex-col border-t-2 border-r-4 border-b-4 border-t-white border-r-[#636163] border-b-[#636163]">
        <div className="mt-[2px] mr-1 flex h-[53px] shrink-0 items-center border-t-2 border-r-2 border-t-[#848284] border-r-white pl-[89px]">
          {PANEL_TOOLS.map((t) => <ToolButton key={t.label} tool={t} className="w-[53px]" />)}
        </div>
        <ul className="mr-1 mb-1.5 min-h-0 flex-1 border-t-4 border-r-2 border-t-[#636163] border-r-[#e4e2de] bg-white text-[21px] shadow-[0_4px_0_#f4f3f1]">
          <li>
            <div className="flex h-[35px] items-center">
              <span className="mt-0.5 ml-1.5 flex h-[18px] w-[18px] items-center justify-center border-2 border-[#848284]">
                <span className="h-0.5 w-2.5 bg-black" />
              </span>
              <span className="w-4 border-t-2 border-dotted border-[#9c9a9c]" />
              <svg viewBox="0 0 13 14" className="h-7 w-[25px]" fill="none" stroke="#000" aria-hidden="true">
                <rect x=".6" y="1.500" width="11.500" height="12" rx="1" fill="#fff" />
                <path fill="#848284" d="M3.500 2.500l1-2h4l1 2z" />
                <path strokeWidth="1.500" d="M3 7l2 3 5-5" />
              </svg>
              <span className="ml-3">Circuit1</span>
            </div>
            <ul>
              <li className="flex h-[35px] items-center">
                <span className="-mt-[18px] ml-[53px] h-[22px] w-[22px] border-b-2 border-l-2 border-dotted border-[#9c9a9c]" />
                {sheetIcon}
                <span className="ml-2 bg-[#d6d3ce] px-[3px] leading-[35px]">Circuit1</span>
              </li>
            </ul>
          </li>
        </ul>
      </div>
      <div role="tablist" className="flex h-[38px] shrink-0 items-start text-[21px] whitespace-nowrap">
        <button type="button" role="tab" aria-selected="true" className="relative -mt-1 h-11 w-[112px] rounded-br-md border-r-2 border-b-4 border-[#636163] bg-[#d6d3ce] pt-3 pr-1.5 leading-7">
          Hierarchy
        </button>
        <button type="button" role="tab" aria-selected="false" className="h-[38px] w-[95px] rounded-br-md border-r-4 border-b-4 border-[#636163] leading-7 shadow-[inset_2px_0_0_#fff]">
          Visibility
        </button>
        <button type="button" role="tab" aria-selected="false" className="ml-0.5 h-[38px] w-[144px] rounded-br-md border-r-4 border-b-4 border-[#636163] leading-7 shadow-[inset_2px_0_0_#fff]">
          Project View
        </button>
      </div>
    </aside>
  );
}

/* ---------- schematic ---------- */

const RULER_STEP = 195.7;
const RESISTORS = [
  { name: "R2", x: 654 },
  { name: "R3", x: 892 },
  { name: "R4", x: 1094 },
];

function Schematic() {
  return (
    <svg className="block h-full w-full" fontFamily="Liberation Sans, Arial, sans-serif" role="img" aria-label="Circuit schematic">
      <defs>
        <pattern id="dots" x="11" y="14" width="18.343" height="17.750" patternUnits="userSpaceOnUse">
          <rect width="2" height="2" fill="#222" />
        </pattern>
      </defs>
      <rect width="100%" height="100%" fill="url(#dots)" />
      <rect y="35" width="100%" height="5" fill="#848284" />
      {[0, 1, 2, 3, 4, 5, 6].map((i) => (
        <g key={i}>
          <rect x={Math.round(64.5 + i * RULER_STEP)} width="2" height="35" fill="#848284" />
          {i > 0 && (
            <text x={Math.round(i * RULER_STEP) - 33} y="24" fontSize="18" fill="#848284" textAnchor="middle">
              {i}
            </text>
          )}
        </g>
      ))}
      <g fill="#fff">
        <rect x="418" y="348" width="50" height="80" />
        <rect x="295" y="510" width="62" height="51" />
        {RESISTORS.map((r) => <rect key={r.name} x={r.x + 14} y="500" width="48" height="51" />)}
      </g>
      <g fill="none" stroke="#000" strokeWidth="2">
        <path d="M397 388h19l5-10 9 19 9-19 10 19 9-19 9 19 3-9h20" />
        <path d="M269 512v18M244 530h49M256 542h24M244 554h49M256 566h24M269 566v18" />
        {RESISTORS.map((r) => (
          <path key={r.name} d={`M${r.x} 494v19l11 5-20 9 20 9-20 9 20 9-20 8 9 4v18`} />
        ))}
      </g>
      <g fontSize="25" fontWeight="bold" fill="#000">
        <text x="426" y="371">R1</text>
        <text x="417" y="424">1kΩ</text>
        <text x="296" y="531">V1</text>
        <text x="296" y="559">0 V</text>
        {RESISTORS.map((r) => (
          <g key={r.name}>
            <text x={r.x + 14} y="521">{r.name}</text>
            <text x={r.x + 14} y="549">1kΩ</text>
          </g>
        ))}
      </g>
    </svg>
  );
}

function ScrollButton({ label, d }: { label: string; d: "up" | "down" | "left" | "right" }) {
  return (
    <button type="button" aria-label={label} className={`flex h-[31px] w-8 shrink-0 items-center justify-center bg-[#d6d3ce] ${RAISED}`}>
      <Arrow d={d} />
    </button>
  );
}

function SheetArea() {
  return (
    <main className="flex min-w-0 flex-1 flex-col">
      <div className="flex min-h-0 flex-1 flex-col border-r-2 border-b-2 border-[#424142] pt-[9px] pr-2 pb-3 pl-2 shadow-[inset_0_2px_0_#f4f3f1]">
        <div className="flex min-h-0 flex-1 flex-col border-t-4 border-r-2 border-b-2 border-l-4 border-t-[#636163] border-r-white border-b-white border-l-[#636163]">
          <div className="flex min-h-0 flex-1">
            <div className="min-w-0 flex-1 border-t-2 border-[#848284] bg-white">
              <Schematic />
            </div>
            <div className={`flex w-8 flex-col ${DITHER}`}>
              <ScrollButton label="Scroll up" d="up" />
              <div className="min-h-0 flex-1">
                <div className={`h-[67%] bg-[#d6d3ce] ${RAISED}`} />
              </div>
              <ScrollButton label="Scroll down" d="down" />
            </div>
          </div>
          <div className="flex h-[31px] shrink-0">
            <div className={`flex min-w-0 flex-1 ${DITHER}`}>
              <ScrollButton label="Scroll left" d="left" />
              <div className="min-w-0 flex-1">
                <div className={`ml-[107px] h-[31px] w-2/3 bg-[#d6d3ce] ${RAISED}`} />
              </div>
              <ScrollButton label="Scroll right" d="right" />
            </div>
            <div className="w-8 bg-[#d6d3ce]" />
          </div>
        </div>
      </div>
      <div className="flex h-[45px] shrink-0 items-start justify-between pr-[7px] pl-[5px]">
        <button type="button" className="-mt-0.5 flex h-[45px] w-[152px] items-center rounded-b-md border-r-2 border-b-4 border-l-2 border-r-[#212021] border-b-[#212021] border-l-white bg-[#d6d3ce] pt-1 pl-[7px] text-[21px] whitespace-nowrap">
          {sheetIcon}
          <span className="ml-2">Circuit1 *</span>
        </button>
        <div className="mt-2.5 flex">
          <button type="button" aria-label="Previous sheet" className="flex h-[30px] w-[30px] items-center justify-center shadow-[inset_2px_2px_0_#fff,inset_-2px_-2px_0_#424142]">
            <Arrow d="left" fill="#00008c" />
          </button>
          <button type="button" aria-label="Next sheet" className="flex h-[30px] w-[30px] items-center justify-center shadow-[inset_2px_2px_0_#fff,inset_-2px_-2px_0_#424142]">
            <Arrow d="right" fill="#00008c" />
          </button>
        </div>
      </div>
    </main>
  );
}

function InstrumentBar() {
  const rule = <span className="h-1 w-[46px] shrink-0 border-t-2 border-[#848284] bg-white" />;
  return (
    <div className="flex w-[55px] shrink-0 flex-col">
      <div role="toolbar" className="flex flex-col items-center border-r-2 border-b-2 border-[#848284]">
        <div className="flex flex-col gap-1 self-start pt-2">
          <span className="h-[5px] w-[51px] border-b-2 border-[#848284] bg-white" />
          <span className="h-[5px] w-[51px] border-b-2 border-[#848284] bg-white" />
        </div>
        <div className="mr-1 flex h-[784px] shrink-0 flex-col pt-1">
          {INSTRUMENTS.map((t) => (
            <button key={t.label} type="button" aria-label={t.label} className="flex flex-1 items-center justify-center">
              {t.icon}
            </button>
          ))}
        </div>
        <span className="h-1.5" />
        {rule}
        <button type="button" aria-label="Current probe" className="mr-1 flex h-14 items-center">{clampIcon}</button>
        {rule}
        <button type="button" aria-label="LabVIEW instrument" className="mr-1 flex h-14 items-center">{labviewIcon}</button>
        <button type="button" aria-label="More LabVIEW instruments" className="-mt-3 mr-1 flex"><Arrow d="right" /></button>
        <button type="button" aria-label="Measurement probe" className="mr-1 flex h-10 items-center">{probeTagIcon}</button>
        <button type="button" aria-label="More probes" className="-mt-1 mr-1 flex"><Arrow d="right" /></button>
      </div>
      <div className="flex-1 border-b-2 border-[#848284]" />
    </div>
  );
}

function StatusBar() {
  const pane = "h-8 shadow-[inset_2px_2px_0_#848284,inset_-2px_-2px_0_#fff]";
  return (
    <footer className="flex h-[43px] shrink-0 items-center gap-[3px] border-t-2 border-white pl-[572px] text-[21px] leading-8">
      <div className={`w-[318px] pl-1 ${pane}`}>-</div>
      <div className={`min-w-0 flex-1 ${pane}`} />
      <div className={`w-[367px] pl-1 ${pane}`}>-</div>
      <div className={`ml-0.5 flex w-[126px] items-center justify-center gap-[3px] ${pane}`}>
        {[0, 1, 2, 3, 4, 5, 6].map((i) => (
          <span key={i} className="h-6 w-[14px] shadow-[inset_2px_2px_0_#848284,inset_-2px_-2px_0_#f4f3f1]" />
        ))}
      </div>
      <svg viewBox="0 0 12 12" className="mt-2 mr-0.5 ml-2 h-6 w-6" stroke="#848284" strokeWidth="1.200" aria-hidden="true">
        <path d="M0 12l12-12M4 12l8-8M8 12l4-4" />
        <path stroke="#fff" d="M1.200 12l11-11M5.200 12l7-7M9.200 12l3-3" />
      </svg>
    </footer>
  );
}

export default function App() {
  return (
    <div className="h-screen bg-white pr-[19px] pb-1">
      <svg className="absolute h-0 w-0" aria-hidden="true">
        <defs>
          <linearGradient id="tile" x1="0" y1="0" x2="1" y2="1">
            <stop offset="0" stopColor="#2a94ff" />
            <stop offset=".5" stopColor="#8cc6ff" />
            <stop offset="1" stopColor="#d0e8fa" />
          </linearGradient>
        </defs>
      </svg>
      <div className="flex h-full flex-col overflow-hidden border-r-4 border-b-2 border-r-[#4a494a] border-b-[#848284] bg-[#d6d3ce] pr-[5px] font-['DejaVu_Sans_Condensed','DejaVu_Sans',sans-serif] text-black">
        <TitleBar />
        <MenuBar />
        <Toolbars />
        <div className="flex min-h-0 flex-1">
          <DesignToolbox />
          <SheetArea />
          <InstrumentBar />
        </div>
        <StatusBar />
      </div>
    </div>
  );
}
